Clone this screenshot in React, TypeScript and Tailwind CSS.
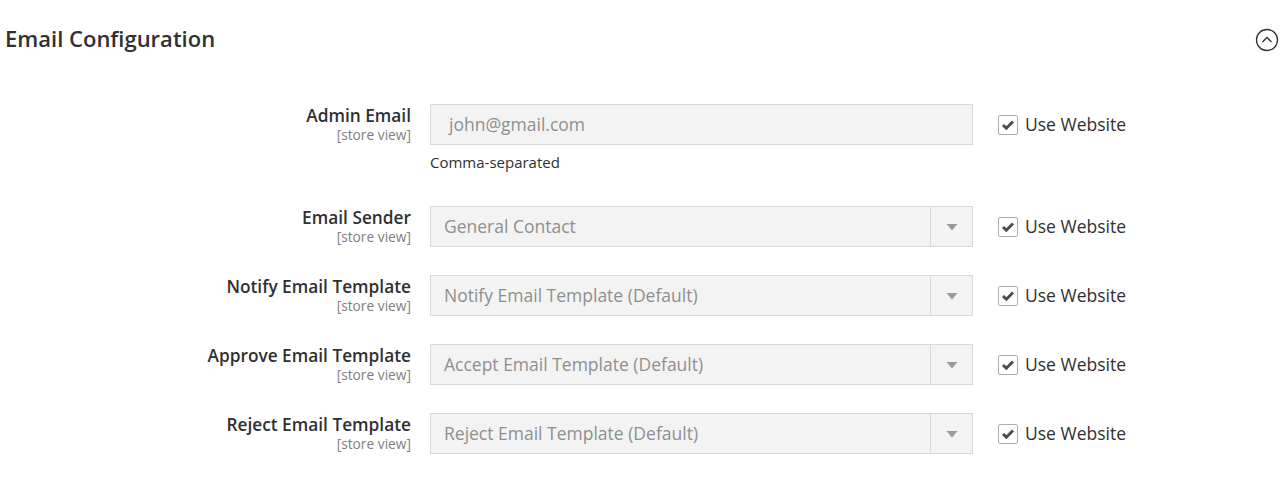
import React from "react";

const font = { fontFamily: '"Open Sans", "Noto Sans", sans-serif' };

function Label({ title }: { title: string }) {
  return (
    <div className="w-[411px] shrink-0 pt-[1px] text-right">
      <div className="text-[17.3px] font-semibold leading-[22px] text-[#303030]">{title}</div>
      <div className="text-[13.75px] leading-[16px] text-[#808080]">[store view]</div>
    </div>
  );
}

function UseWebsite() {
  return (
    <div className="ml-[25px] flex h-[41px] items-center">
      <div className="flex h-[20px] w-[20px] items-center justify-center rounded-[2px] border border-[#adadad] bg-white">
        <svg width="14" height="12" viewBox="0 0 14 12">
          <path d="M2 6 L5.3 9.3 L12 2.5" fill="none" stroke="#514943" strokeWidth="2.8" strokeLinecap="butt" />
        </svg>
      </div>
      <span className="ml-[7px] text-[17.5px] text-[#303030]">Use Website</span>
    </div>
  );
}

function SelectRow({ title, value }: { title: string; value: string }) {
  return (
    <div className="flex">
      <Label title={title} />
      <div className="ml-[19px] flex h-[41px] w-[543px] items-center border border-[#d9d9d9] bg-[#f3f3f3]">
        <div className="flex-1 pl-[13px] text-[17.5px] text-[#8f8f8f]">{value}</div>
        <div className="flex h-full w-[42px] items-center justify-center border-l border-[#d9d9d9]">
          <svg width="12" height="8" viewBox="0 0 12 8">
            <path d="M0.5 1 L11.5 1 L6 7.5 Z" fill="#9a9a9a" />
          </svg>
        </div>
      </div>
      <UseWebsite />
    </div>
  );
}

export default function App() {
  return (
    <div className="h-[485px] w-[1280px] bg-white" style={font}>
      <div className="flex h-[76px] items-center justify-between pl-[5px] pr-[1px]">
        <h2 className="text-[22px] font-semibold text-[#303030]">Email Configuration</h2>
        <svg width="24" height="24" viewBox="0 0 24 24" className="mt-[3px]">
          <circle cx="12" cy="12" r="10.5" fill="none" stroke="#303030" strokeWidth="1.3" />
          <path d="M7.5 14 L12 9.5 L16.5 14" fill="none" stroke="#303030" strokeWidth="1.4" />
        </svg>
      </div>
      <div className="flex flex-col gap-[28px] pt-[28px]">
        <div className="flex">
          <Label title="Admin Email" />
          <div className="ml-[19px] w-[543px]">
            <div className="flex h-[41px] items-center border border-[#d9d9d9] bg-[#f3f3f3] pl-[18px] text-[17.5px] text-[#8f8f8f]">
              john@gmail.com
            </div>
            <div className="mt-[7px] pb-[6px] text-[15px] leading-[20px] text-[#303030]">Comma-separated</div>
          </div>
          <UseWebsite />
        </div>
        <SelectRow title="Email Sender" value="General Contact" />
        <SelectRow title="Notify Email Template" value="Notify Email Template (Default)" />
        <SelectRow title="Approve Email Template" value="Accept Email Template (Default)" />
        <SelectRow title="Reject Email Template" value="Reject Email Template (Default)" />
      </div>
    </div>
  );
}
